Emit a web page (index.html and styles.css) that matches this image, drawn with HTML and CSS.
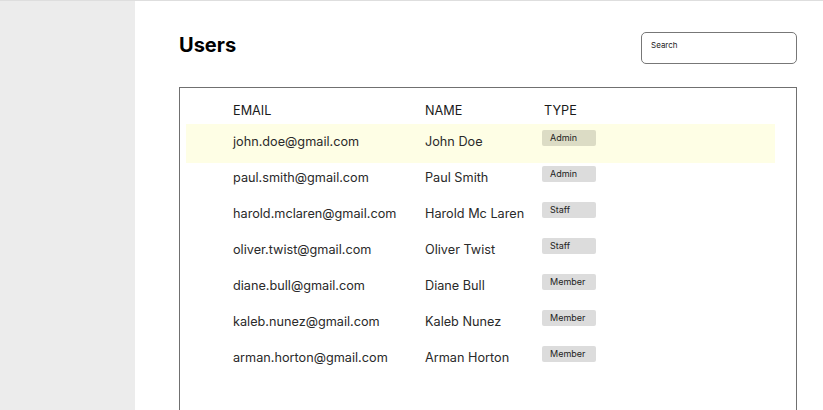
FILE: index.html
```html
<!DOCTYPE html>
<html>
<head>
<meta charset="utf-8">
<link rel="stylesheet" href="styles.css">
</head>
<body>
<div class="app">
  <aside class="sidebar"></aside>
  <main class="main">
    <div class="topbar">
      <h1 class="title">Users</h1>
      <div class="search">Search</div>
    </div>
    <div class="table">
      <div class="row head">
        <div>EMAIL</div><div>NAME</div><div>TYPE</div>
      </div>
      <div class="row active">
        <div>john.doe@gmail.com</div><div>John Doe</div><div><span class="badge">Admin</span></div>
      </div>
      <div class="row">
        <div>paul.smith@gmail.com</div><div>Paul Smith</div><div><span class="badge">Admin</span></div>
      </div>
      <div class="row">
        <div>harold.mclaren@gmail.com</div><div>Harold Mc Laren</div><div><span class="badge">Staff</span></div>
      </div>
      <div class="row">
        <div>oliver.twist@gmail.com</div><div>Oliver Twist</div><div><span class="badge">Staff</span></div>
      </div>
      <div class="row">
        <div>diane.bull@gmail.com</div><div>Diane Bull</div><div><span class="badge">Member</span></div>
      </div>
      <div class="row">
        <div>kaleb.nunez@gmail.com</div><div>Kaleb Nunez</div><div><span class="badge">Member</span></div>
      </div>
      <div class="row">
        <div>arman.horton@gmail.com</div><div>Arman Horton</div><div><span class="badge">Member</span></div>
      </div>
    </div>
  </main>
</div>
</body>
</html>
```
FILE: styles.css
```css
* { box-sizing: border-box; }
html, body { margin: 0; padding: 0; background: #fff; }
body {
  font-family: Inter, "Noto Sans", sans-serif;
  color: #2a2a2a;
  border-top: 1px solid #dedede;
  height: 410px;
  overflow: hidden;
}
.app { display: flex; height: 409px; }
.sidebar { width: 135px; flex: none; background: #ececec; }
.main { flex: 1; padding: 0 26px 0 44px; }
.topbar {
  display: flex;
  justify-content: space-between;
  align-items: flex-start;
  height: 86px;
}
.title {
  margin: 0;
  padding-top: 31px;
  font-size: 20px;
  line-height: 26px;
  font-weight: 700;
  color: #000;
}
.search {
  margin-top: 31px;
  width: 156px;
  height: 32px;
  border: 1px solid #777;
  border-radius: 5px;
  padding: 7px 9px;
  font-size: 8px;
  line-height: 10px;
  color: #222;
}
.table {
  border: 1px solid #707070;
  border-bottom: none;
  height: 330px;
  padding: 0 21px 0 6px;
}
.row {
  display: grid;
  grid-template-columns: 192px 119px 1fr;
  padding-left: 47px;
  height: 36px;
  font-size: 12.7px;
  line-height: 16px;
  align-items: start;
}
.row > div { padding-top: 10px; }
.row.head { height: 36px; }
.row.head > div { padding-top: 15px; color: #1a1a1a; }
.row.active {
  background: #fefee5;
  height: 39px;
  margin-bottom: -3px;
}
.badge {
  display: block;
  margin: -4px 0 0 -2px;
  width: 54px;
  height: 16px;
  border-radius: 2px;
  background: #dcdcdc;
  font-size: 9px;
  line-height: 16px;
  padding-left: 8px;
  color: #222;
}
.active .badge { background: #dcdcc5; }
```
